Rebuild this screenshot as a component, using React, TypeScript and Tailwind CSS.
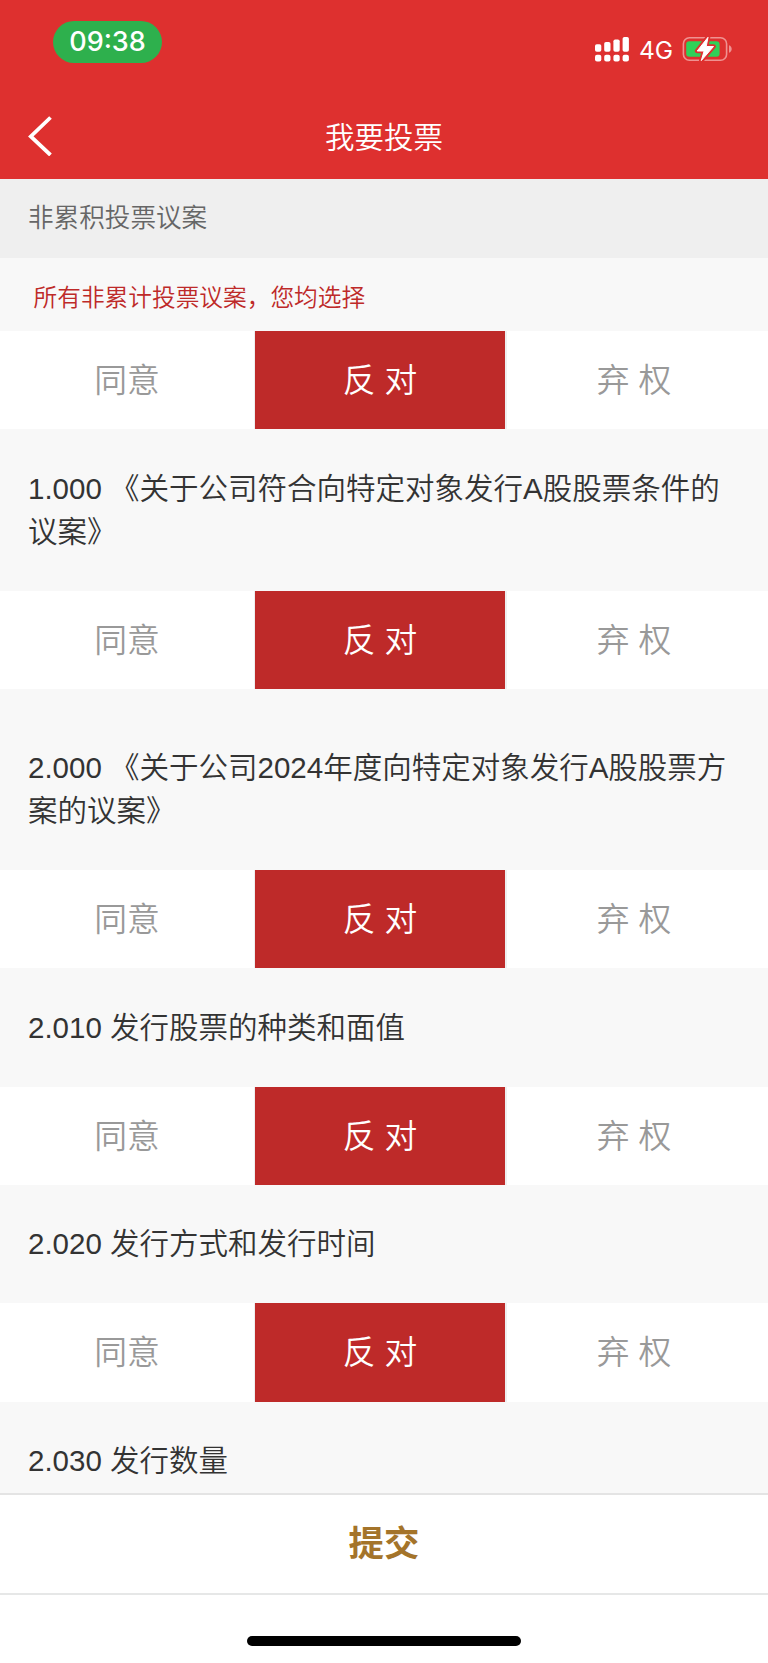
import { useState } from "react";

type Choice = "agree" | "against" | "abstain";

const choices: { key: Choice; label: string }[] = [
  { key: "agree", label: "同意" },
  { key: "against", label: "反 对" },
  { key: "abstain", label: "弃 权" },
];

const proposals = [
  { no: "1.000", title: "《关于公司符合向特定对象发行A股股票条件的议案》" },
  {
    no: "2.000",
    title: "《关于公司2024年度向特定对象发行A股股票方案的议案》",
    group: true,
  },
  { no: "2.010", title: "发行股票的种类和面值" },
  { no: "2.020", title: "发行方式和发行时间" },
  { no: "2.030", title: "发行数量" },
];

const SignalIcon = () => (
  <svg width="34" height="25" viewBox="0 0 34 25" fill="#fff">
    <rect x="0" y="7.2" width="6.3" height="7.5" rx="1.8" />
    <rect x="9.2" y="5" width="6.3" height="9.7" rx="1.8" />
    <rect x="18.4" y="2.5" width="6.3" height="12.2" rx="1.8" />
    <rect x="27.6" y="0" width="6.3" height="14.7" rx="1.8" />
    <rect x="0" y="17.8" width="6.3" height="6.6" rx="2" />
    <rect x="9.2" y="17.8" width="6.3" height="6.6" rx="2" />
    <rect x="18.4" y="17.8" width="6.3" height="6.6" rx="2" />
    <rect x="27.6" y="17.8" width="6.3" height="6.6" rx="2" />
  </svg>
);

const BatteryIcon = () => (
  <svg width="50" height="26" viewBox="0 0 50 26">
    <rect
      x="1.4"
      y="1.8"
      width="43.2"
      height="22.4"
      rx="6"
      fill="none"
      stroke="#ef9291"
      strokeWidth="1.6"
    />
    <path d="M47 9.2c1.7.6 2.7 2 2.7 3.8s-1 3.2-2.7 3.8z" fill="#ef9291" />
    <rect x="4.2" y="5.2" width="33.4" height="15.6" rx="3.2" fill="#30d158" />
    <path
      d="M26 1.3 15.2 15h6.9l-2.8 9.6L31.5 10.5h-7.3z"
      fill="#de302f"
      stroke="#de302f"
      strokeWidth="4.6"
      strokeLinejoin="round"
    />
    <path
      d="M26 1.3 15.2 15h6.9l-2.8 9.6L31.5 10.5h-7.3z"
      fill="#fff"
      stroke="#fff"
      strokeWidth="1"
      strokeLinejoin="round"
    />
  </svg>
);

const StatusBar = () => (
  <div className="flex h-[90px] items-start justify-between pr-[36px] pl-[53px] font-['Inter',sans-serif] text-white">
    <div className="mt-[21px] flex h-[42px] w-[109px] items-center justify-center rounded-full bg-[#2eb04d] pt-[1px] text-[27px] font-medium">
      09:38
    </div>
    <div className="mt-[36px] flex h-[26px] items-center">
      <SignalIcon />
      <span className="mt-[2px] ml-[10px] w-[43px] text-[24.5px] leading-none font-normal">
        4G
      </span>
      <BatteryIcon />
    </div>
  </div>
);

const ChoiceRow = ({
  value,
  onChange,
}: {
  value: Choice;
  onChange: (choice: Choice) => void;
}) => (
  <div className="flex h-[98.4px] shrink-0 bg-white">
    {choices.map(({ key, label }) => (
      <div
        key={key}
        className="w-[252px] border-r-2 border-[#eeeff0] first:w-[255px] first:border-r last:w-[254px] last:border-r-0"
      >
        <button
          type="button"
          onClick={() => onChange(key)}
          className={`h-full w-full pt-[1px] text-[32.8px] font-[350] ${
            value === key ? "bg-[#be2a29] text-white" : "bg-white text-[#999]"
          }`}
        >
          {label}
        </button>
      </div>
    ))}
  </div>
);

const App = () => {
  const [votes, setVotes] = useState<Choice[]>(proposals.map(() => "against"));
  const [all, setAll] = useState<Choice>("against");

  const voteAll = (choice: Choice) => {
    setAll(choice);
    setVotes(proposals.map(() => choice));
  };

  const vote = (index: number, choice: Choice) => {
    setVotes(votes.map((v, i) => (i === index ? choice : v)));
  };

  return (
    <div className="flex h-[1663px] w-[768px] flex-col overflow-hidden bg-white font-['Liberation_Sans','Noto_Sans_CJK_SC',sans-serif]">
      <header className="h-[179px] shrink-0 bg-[#de302f]">
        <StatusBar />
        <div className="grid h-[89px] grid-cols-[1fr_auto_1fr] items-center px-[28px] text-white">
          <button type="button" className="justify-self-start pt-[2px]">
            <svg width="26" height="40" viewBox="0 0 26 40" fill="none">
              <path d="M22.5 1.5 2.8 20.5l19.700 18.5" stroke="#fff" strokeWidth="3.8" />
            </svg>
          </button>
          <h1 className="pt-[7px] text-[29.5px] font-[350]">我要投票</h1>
        </div>
      </header>

      <main className="flex min-h-0 flex-1 flex-col overflow-hidden bg-[#f8f8f8]">
        <h2 className="flex h-[79px] shrink-0 items-center bg-[#efefef] pl-[28px] text-[25.6px] font-[350] text-[#666]">
          非累积投票议案
        </h2>
        <p className="flex h-[73px] shrink-0 items-center pt-[8px] pl-[33.5px] text-[23.7px] font-[350] text-[#be2a29]">
          所有非累计投票议案，您均选择
        </p>
        <ChoiceRow value={all} onChange={voteAll} />
        {proposals.map((proposal, index) => (
          <section key={proposal.no} className="shrink-0">
            <p
              className={`px-[28px] pb-[37.4px] text-[29.5px] leading-[43.4px] font-[350] text-[#333] ${
                proposal.group ? "pt-[56.4px]" : "pt-[37.4px]"
              }`}
            >
              {`${proposal.no} ${proposal.title}`}
            </p>
            {index < proposals.length - 1 && (
              <ChoiceRow
                value={votes[index]}
                onChange={(choice) => vote(index, choice)}
              />
            )}
          </section>
        ))}
      </main>

      <footer className="h-[170px] shrink-0 border-t-2 border-[#e4e4e4] bg-white">
        <button
          type="button"
          className="h-[100px] w-full border-b-2 border-[#e6e7e7] pt-[2px] text-[35.4px] font-bold text-[#a4742a]"
        >
          提交
        </button>
        <div className="mx-auto mt-[41px] h-[10px] w-[274px] rounded-full bg-black" />
      </footer>
    </div>
  );
};

export default App;
